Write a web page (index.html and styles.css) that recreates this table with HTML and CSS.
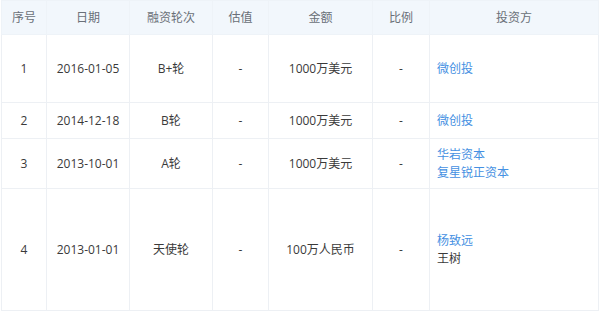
FILE: index.html
```html
<!DOCTYPE html>
<html lang="zh-CN">
<head>
<meta charset="utf-8">
<title>融资历程</title>
<link rel="stylesheet" href="styles.css">
</head>
<body>
<table class="fin">
  <colgroup>
    <col class="c-no"><col class="c-date"><col class="c-round"><col class="c-val"><col class="c-amt"><col class="c-ratio"><col class="c-inv">
  </colgroup>
  <thead>
    <tr class="r-head">
      <th>序号</th><th>日期</th><th>融资轮次</th><th>估值</th><th>金额</th><th>比例</th><th>投资方</th>
    </tr>
  </thead>
  <tbody>
    <tr class="r1">
      <td>1</td><td>2016-01-05</td><td>B+轮</td><td>-</td><td>1000万美元</td><td>-</td>
      <td class="inv"><a class="link">微创投</a></td>
    </tr>
    <tr class="r2">
      <td>2</td><td>2014-12-18</td><td>B轮</td><td>-</td><td>1000万美元</td><td>-</td>
      <td class="inv"><a class="link">微创投</a></td>
    </tr>
    <tr class="r3">
      <td>3</td><td>2013-10-01</td><td>A轮</td><td>-</td><td>1000万美元</td><td>-</td>
      <td class="inv"><a class="link">华岩资本</a><a class="link">复星锐正资本</a></td>
    </tr>
    <tr class="r4">
      <td>4</td><td>2013-01-01</td><td>天使轮</td><td>-</td><td>100万人民币</td><td>-</td>
      <td class="inv"><a class="link">杨致远</a><span class="plain">王树</span></td>
    </tr>
  </tbody>
</table>
</body>
</html>
```
FILE: styles.css
```css
html, body {
  margin: 0;
  padding: 0;
  background: #ffffff;
}
body {
  font-family: "Open Sans", "Noto Sans CJK SC", sans-serif;
  font-size: 12px;
  color: #3a3a3a;
}
.fin {
  margin-left: 1px;
  width: 597px;
  table-layout: fixed;
  border-collapse: collapse;
}
.c-no { width: 45px; }
.c-date { width: 83px; }
.c-round { width: 83px; }
.c-val { width: 56px; }
.c-amt { width: 104px; }
.c-ratio { width: 57px; }
.c-inv { width: 169px; }
.fin th, .fin td {
  border: 1px solid #edf0f4;
  padding: 0;
  text-align: center;
  vertical-align: middle;
  line-height: 18px;
}
.fin th {
  background: #f2f7fc;
  color: #6a7078;
  font-weight: normal;
  border-color: #eef3f8;
}
.r-head { height: 34px; }
.r1 { height: 68px; }
.r2 { height: 36px; }
.r3 { height: 50px; }
.r4 { height: 122px; }
.fin td.inv {
  text-align: left;
  padding-left: 7px;
}
.link, .plain {
  display: block;
}
.link {
  color: #4590e2;
}
.plain {
  color: #3a3a3a;
}
```
